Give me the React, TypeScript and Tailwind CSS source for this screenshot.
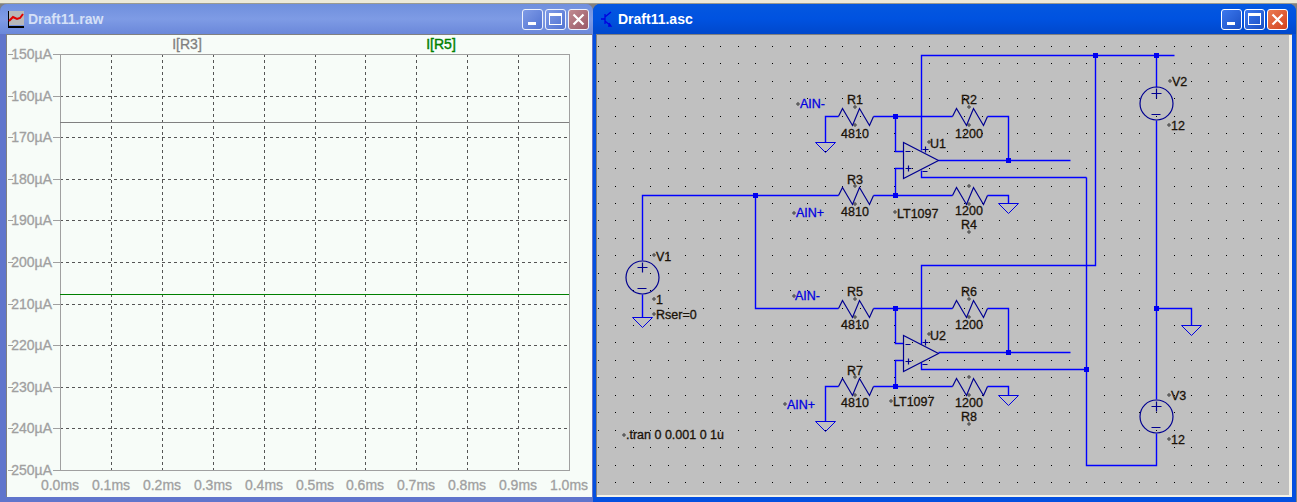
const FONT = "font-['Liberation_Sans',Arial,sans-serif]";

const yLabels = ['150', '160', '170', '180', '190', '200', '210', '220', '230', '240', '250'];
const xLabels = ['0.0', '0.1', '0.2', '0.3', '0.4', '0.5', '0.6', '0.7', '0.8', '0.9', '1.0'];

function WinButtons({ active }: { active: boolean }) {
  const blue = active ? 'from-[#3c78ee] to-[#1a4fc4]' : 'from-[#7f9be6] to-[#5273d2]';
  const red = active ? 'from-[#ea7a50] to-[#d2401c]' : 'from-[#c08a90] to-[#9a5a68]';
  const line = active ? 'border-white' : 'border-[#eef2fb]';
  return (
    <div className={`flex gap-[2px] ${active ? 'mr-[8px]' : 'mr-[4px]'}`}>
      <div className={`w-[21px] h-[21px] rounded-[3px] border ${line} bg-gradient-to-br ${blue} flex items-end pl-[5px] pb-[4px]`}>
        <div className="w-[8px] h-[3px] bg-white" />
      </div>
      <div className={`w-[21px] h-[21px] rounded-[3px] border ${line} bg-gradient-to-br ${blue} flex items-center justify-center`}>
        <div className="w-[13px] h-[12px] border border-white border-t-[3px]" />
      </div>
      <div className={`w-[21px] h-[21px] rounded-[3px] border ${line} bg-gradient-to-br ${red} flex items-center justify-center`}>
        <svg width="13" height="13" viewBox="0 0 13 13">
          <path d="M1.5 1.5L11.5 11.5M11.5 1.5L1.5 11.5" stroke="#fff" strokeWidth="2.2" />
        </svg>
      </div>
    </div>
  );
}

function PlotIcon() {
  return (
    <svg width="17" height="17" viewBox="0 0 17 17" className="shrink-0" shapeRendering="crispEdges">
      <rect x="1" y="0" width="16" height="14" fill="#b8b8b8" />
      <path d="M1 0V15H17" fill="none" stroke="#000" />
      <path d="M1 16H17M3 15v2M6 15v2M9 15v2M12 15v2M15 15v2" stroke="#000" />
      <path d="M2 10L6 6L10 8L13 7L16 3" fill="none" stroke="#e00000" strokeWidth="2" shapeRendering="auto" />
    </svg>
  );
}

function SchemIcon() {
  return (
    <svg width="16" height="16" viewBox="0 0 16 16" className="shrink-0">
      <path d="M1 8H5M5 3V13M5 6L11 1M5 10L11 15M9 12L11 15L8 15" fill="none" stroke="#0000e0" strokeWidth="1.3" />
    </svg>
  );
}

function PlotPane() {
  const gridX = Array.from({ length: 11 }, (_, i) => Math.round(60 + i * 50.9));
  const gridY = Array.from({ length: 11 }, (_, i) => Math.round(54 + i * 41.6));
  return (
    <svg width="585" height="460" viewBox="7 35 585 460" className={`block ${FONT}`}>
      <g shapeRendering="crispEdges">
        {gridX.slice(1, 10).map((x) => (
          <line key={x} x1={x + 0.5} y1="54" x2={x + 0.5} y2="470" stroke="#555" strokeDasharray="3 3" />
        ))}
        {gridY.slice(1, 10).map((y) => (
          <line key={y} x1="60" y1={y + 0.5} x2="569" y2={y + 0.5} stroke="#555" strokeDasharray="3 3" />
        ))}
        <rect x="60.5" y="54.5" width="509" height="416" fill="none" stroke="#a0a0a0" />
        {gridY.map((y) => (
          <g key={y} stroke="#a0a0a0">
            <line x1="8" y1={y + 0.5} x2="13" y2={y + 0.5} />
            <line x1="53" y1={y + 0.5} x2="60" y2={y + 0.5} />
          </g>
        ))}
        <line x1="60" y1="122.5" x2="569" y2="122.5" stroke="#808080" />
        <line x1="60" y1="294.5" x2="569" y2="294.5" stroke="#008000" strokeWidth="1.5" />
      </g>
      <g stroke="#a0a0a0" strokeWidth="0.3" fill="#a0a0a0" fontSize="14">
        {yLabels.map((t, i) => (
          <text key={t} x="52" y={gridY[i] + 5} textAnchor="end">
            {t}µA
          </text>
        ))}
        {xLabels.map((t, i) => (
          <text key={t} x={gridX[i]} y="490" textAnchor="middle">
            {t}ms
          </text>
        ))}
      </g>
      <text x="187" y="49" textAnchor="middle" fontSize="14" fill="#808080" stroke="#808080" strokeWidth="0.3">I[R3]</text>
      <text x="441" y="49" textAnchor="middle" fontSize="14" fill="#008000" stroke="#008000" strokeWidth="0.4">I[R5]</text>
    </svg>
  );
}

const wires = [
  'M825 142V116H838', 'M873 116H952', 'M987 116H1008V160', 'M938 160H1070',
  'M895 116V151H903', 'M903 168H895V195', 'M642 260V195H838', 'M873 195H952', 'M987 195H1008V203',
  'M921 150V55H1174', 'M921 170V177H1086', 'M1095 55V265H921V344',
  'M755 195V308H838', 'M873 308H952', 'M987 308H1008V352', 'M938 352H1070',
  'M895 308V343H903', 'M903 360H895V386', 'M825 421V386H838', 'M873 386H952', 'M987 386H1008V395',
  'M921 362V369H1086', 'M1086 177V465H1156V433',
  'M1156 55V87', 'M1156 120V399', 'M1156 308H1191V325', 'M642 294V317',
];
const dots = [
  [895, 116], [1008, 160], [895, 195], [755, 195], [1095, 55], [1156, 55],
  [895, 308], [1008, 352], [895, 386], [1086, 369], [1156, 308],
];
const grounds = [[825, 142], [1008, 203], [825, 421], [1008, 395], [1191, 325], [642, 317]];
const resistors = [[838, 116], [952, 116], [838, 195], [952, 195], [838, 308], [952, 308], [838, 386], [952, 386]];
const sources = [[642, 277], [1156, 103], [1156, 416]];
const opamps = [[903, 142], [903, 335]];

const labels: [string, number, number, 'start' | 'middle', boolean][] = [
  ['AIN-', 800, 108, 'start', true], ['R1', 855, 104, 'middle', false], ['4810', 855, 138, 'middle', false],
  ['R2', 969, 104, 'middle', false], ['1200', 969, 138, 'middle', false], ['U1', 930, 148, 'start', false],
  ['R3', 855, 184, 'middle', false], ['4810', 855, 216, 'middle', false], ['AIN+', 796, 217, 'start', true],
  ['LT1097', 897, 218, 'start', false], ['1200', 969, 215, 'middle', false], ['R4', 969, 229, 'middle', false],
  ['AIN-', 795, 300, 'start', true], ['R5', 855, 296, 'middle', false], ['4810', 855, 329, 'middle', false],
  ['R6', 969, 296, 'middle', false], ['1200', 969, 329, 'middle', false], ['U2', 930, 340, 'start', false],
  ['R7', 855, 375, 'middle', false], ['4810', 855, 407, 'middle', false], ['AIN+', 787, 409, 'start', true],
  ['LT1097', 893, 406, 'start', false], ['1200', 969, 407, 'middle', false], ['R8', 969, 421, 'middle', false],
  ['V1', 656, 261, 'start', false], ['1', 656, 304, 'start', false], ['Rser=0', 656, 319, 'start', false],
  ['V2', 1172, 86, 'start', false], ['12', 1171, 130, 'start', false],
  ['V3', 1171, 400, 'start', false], ['12', 1171, 444, 'start', false],
  ['.tran 0 0.001 0 1u', 626, 439, 'start', false],
];
const anchors = [
  [798, 104], [855, 107], [855, 125], [969, 107], [969, 125], [929, 142], [855, 186], [855, 204], [794, 213],
  [969, 186], [969, 204], [895, 212], [969, 232], [794, 296], [855, 299], [855, 317], [969, 299], [969, 317],
  [929, 334], [855, 377], [855, 395], [785, 404], [891, 401], [969, 377], [969, 395], [969, 424],
  [654, 255], [654, 299], [654, 314], [1170, 81], [1169, 125], [1169, 395], [1169, 439], [624, 435],
];

function SchematicPane() {
  const gx = Array.from({ length: 40 }, (_, i) => Math.round(598 + i * 17.44));
  const gy = Array.from({ length: 26 }, (_, i) => Math.round(46 + i * 17.44));
  return (
    <svg width="691" height="460" viewBox="597 35 691 460" className={`block ${FONT}`}>
      <g fill="#000" shapeRendering="crispEdges">
        {gx.map((x) => gy.map((y) => <rect key={`${x}-${y}`} x={x} y={y} width="1" height="1" />))}
      </g>
      <g fill="none" stroke="#0000ff" strokeWidth="1.4" transform="translate(0.5 0.5)">
        {wires.map((d) => <path key={d} d={d} />)}
      </g>
      <g fill="#0000f0">
        {dots.map(([x, y]) => <rect key={`${x}-${y}`} x={x - 2} y={y - 2} width="5" height="5" />)}
      </g>
      <g fill="none" stroke="#0000e0" transform="translate(0.5 0.5)">
        {grounds.map(([x, y]) => <path key={`${x}-${y}`} d={`M${x - 10} ${y}H${x + 10}L${x} ${y + 10}Z`} />)}
      </g>
      <g fill="none" stroke="#000090" strokeWidth="1.2" transform="translate(0.5 0.5)">
        {resistors.map(([x, y]) => (
          <path key={`${x}-${y}`} d={`M${x} ${y}L${x + 4} ${y - 8}L${x + 14} ${y + 9}L${x + 21} ${y - 8}L${x + 31} ${y + 9}L${x + 35} ${y}`} />
        ))}
        {sources.map(([x, y]) => (
          <g key={x + y}>
            <circle cx={x} cy={y} r="16.5" />
            <path d={`M${x - 5} ${y - 10}H${x + 5}M${x} ${y - 15}V${y - 5}M${x - 5} ${y + 11}H${x + 4}`} />
          </g>
        ))}
        {opamps.map(([x, y]) => (
          <g key={y}>
            <path d={`M${x} ${y}V${y + 36}L${x + 35} ${y + 18}Z`} />
            <path d={`M${x + 2} ${y + 9}H${x + 7}M${x + 2} ${y + 26}H${x + 8}M${x + 5} ${y + 23}V${y + 29}M${x + 19} ${y + 7}H${x + 25}M${x + 22} ${y + 4}V${y + 10}M${x + 19} ${y + 29}H${x + 24}`} />
          </g>
        ))}
      </g>
      <g fill="none" stroke="#222" strokeWidth="0.9">
        {anchors.map(([x, y]) => <circle key={`${x}-${y}`} cx={x} cy={y} r="1.2" />)}
      </g>
      {labels.map(([t, x, y, anchor, net]) => (
        <text
          key={`${t}-${x}-${y}`}
          x={x}
          y={y}
          textAnchor={anchor}
          fontSize="12.5"
          fill={net ? '#0000e0' : '#1a1208'}
          stroke={net ? '#0000e0' : '#1a1208'}
          strokeWidth="0.3"
        >
          {t}
        </text>
      ))}
    </svg>
  );
}

export default function App() {
  return (
    <div className={`relative w-[1297px] h-[502px] overflow-hidden bg-[#808080] ${FONT}`}>
      <div className="h-[4px] bg-[#ece9d8] border-b border-[#9a9a90]" />

      {/* plot window */}
      <div className="absolute left-0 top-[4px] w-[593px] h-[498px] rounded-t-[7px] bg-[#6075cc] flex flex-col pl-[6px] pr-[1px] pb-[5px]">
        <div className="h-[30px] -ml-[6px] -mr-[1px] rounded-t-[7px] bg-gradient-to-b from-[#6f8fdd] via-[#7e9be5] to-[#6b88da] flex items-center pl-[7px] gap-[4px]">
          <PlotIcon />
          <span className="flex-1 text-[14px] font-bold text-[#d5e0f7]">Draft11.raw</span>
          <WinButtons active={false} />
        </div>
        <div className="flex-1 bg-[#f7fcf8] border-t border-l border-[#808080] overflow-hidden">
          <PlotPane />
        </div>
      </div>

      {/* schematic window */}
      <div className="absolute left-[593px] top-[4px] w-[703px] h-[498px] rounded-t-[7px] bg-[#0450e0] flex flex-col pl-[3px] pr-[4px] pb-[5px]">
        <div className="h-[30px] -ml-[3px] -mr-[4px] rounded-t-[7px] bg-gradient-to-b from-[#0458e0] via-[#0052e0] to-[#0048cc] flex items-center pl-[7px] gap-[2px]">
          <SchemIcon />
          <span className="flex-1 text-[14px] font-bold text-white">Draft11.asc</span>
          <WinButtons active />
        </div>
        <div className="flex-1 bg-[#c0c0c0] border-t border-l border-[#808080] overflow-hidden">
          <div className="h-full border-b-2 border-r-[3px] border-[#f4f2e8] overflow-hidden">
            <SchematicPane />
          </div>
        </div>
      </div>
    </div>
  );
}
